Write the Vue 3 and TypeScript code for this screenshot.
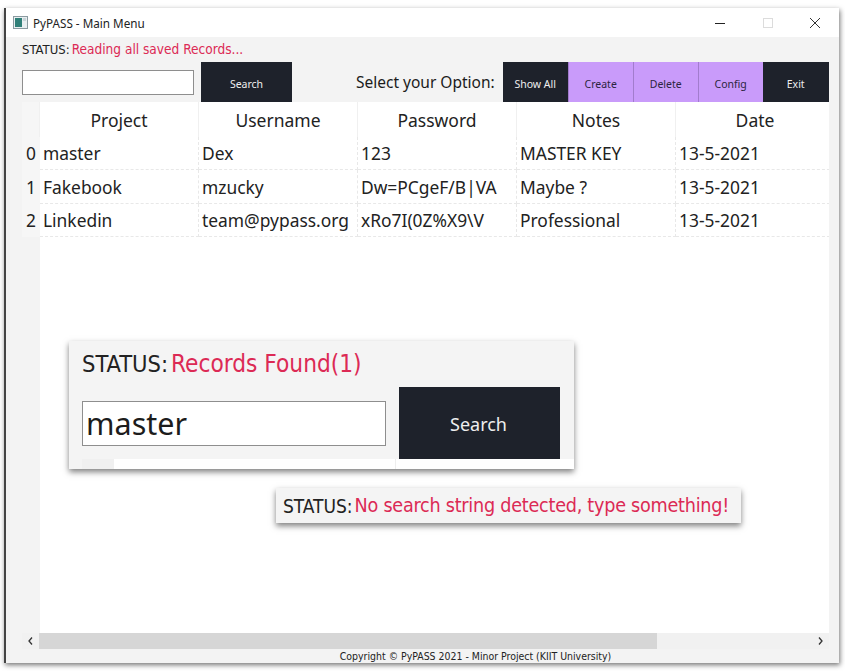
<script setup lang="ts">
const columns: string[] = ['Project', 'Username', 'Password', 'Notes', 'Date']
const rows: string[][] = [
  ['master', 'Dex', '123', 'MASTER KEY', '13-5-2021'],
  ['Fakebook', 'mzucky', 'Dw=PCgeF/B|VA', 'Maybe ?', '13-5-2021'],
  ['Linkedin', 'team@pypass.org', 'xRo7I(0Z%X9\\V', 'Professional', '13-5-2021'],
]
const options = [
  { label: 'Show All', dark: true },
  { label: 'Create', dark: false },
  { label: 'Delete', dark: false },
  { label: 'Config', dark: false },
  { label: 'Exit', dark: true },
]
</script>

<template>
  <div class="page">
    <div class="window">
      <header class="titlebar">
        <svg class="app-icon" width="15" height="13" viewBox="0 0 15 13">
          <rect x="0.5" y="0.5" width="14" height="12" fill="#e8eef0" stroke="#8a9aa0" />
          <rect x="2" y="2" width="7" height="9" fill="#2f7f78" />
          <rect x="10" y="2" width="3" height="3" fill="#c8d4d8" />
        </svg>
        <span class="title">PyPASS - Main Menu</span>
        <div class="controls">
          <svg width="12" height="12" viewBox="0 0 12 12"><path d="M1 6.5h10" stroke="#222" stroke-width="1" /></svg>
          <svg width="12" height="12" viewBox="0 0 12 12"><rect x="1.5" y="1.5" width="9" height="9" fill="none" stroke="#dcdcdc" /></svg>
          <svg width="12" height="12" viewBox="0 0 12 12"><path d="M1 1l10 10M11 1L1 11" stroke="#333" stroke-width="1" fill="none" /></svg>
        </div>
      </header>

      <main class="body">
        <p class="status">
          <span class="status-key">STATUS:</span><span class="status-msg">Reading all saved Records...</span>
        </p>

        <div class="toolbar">
          <input class="search-input" type="text" />
          <button class="btn btn-dark search-btn">Search</button>
          <span class="select-label">Select your Option:</span>
          <div class="options">
            <button
              v-for="o in options"
              :key="o.label"
              class="btn option"
              :class="o.dark ? 'btn-dark' : 'btn-light'"
            >{{ o.label }}</button>
          </div>
        </div>

        <div class="table-area">
          <div class="grid">
            <div class="corner"></div>
            <div v-for="c in columns" :key="c" class="head">{{ c }}</div>
            <template v-for="(row, i) in rows" :key="i">
              <div class="row-no">{{ i }}</div>
              <div v-for="(cell, j) in row" :key="j" class="cell">{{ cell }}</div>
            </template>
          </div>
          <div class="table-rest">
            <div class="rest-gutter"></div>
            <div class="rest-white"></div>
          </div>
          <div class="hscroll">
            <svg class="arrow" width="8" height="10" viewBox="0 0 8 10"><path d="M5.5 1.5L2.5 5l3 3.5" fill="none" stroke="#333" stroke-width="1.3" /></svg>
            <div class="track"><div class="thumb"></div></div>
            <svg class="arrow" width="8" height="10" viewBox="0 0 8 10"><path d="M2.5 1.5L5.5 5l-3 3.5" fill="none" stroke="#333" stroke-width="1.3" /></svg>
          </div>
        </div>

        <footer class="copyright">Copyright © PyPASS 2021 - Minor Project (KIIT University)</footer>
      </main>
    </div>

    <section class="callout callout-found">
      <p class="big-status">
        <span class="status-key">STATUS:</span><span class="status-msg">Records Found(1)</span>
      </p>
      <div class="found-row">
        <div class="big-input">master</div>
        <button class="btn btn-dark big-search">Search</button>
      </div>
      <div class="found-table">
        <div class="ft-gutter"></div>
        <div class="ft-col"></div>
        <div class="ft-col2"></div>
      </div>
    </section>

    <section class="callout callout-empty">
      <span class="status-key">STATUS:</span><span class="status-msg">No search string detected, type something!</span>
    </section>
  </div>
</template>

<style>
html, body { margin: 0; background: #fff; }
</style>

<style scoped>
.page {
  position: relative;
  width: 845px;
  height: 671px;
  overflow: hidden;
  background: #fff;
  font-family: "Noto Sans", "Open Sans", sans-serif;
  padding: 8px 6px 8px 4px;
  box-sizing: border-box;
}
.window {
  height: 655px;
  display: flex;
  flex-direction: column;
  background: #f3f3f3;
  box-shadow: 1px 2px 5px rgba(0, 0, 0, 0.55);
  border-left: 2px solid #444;
}
.titlebar {
  height: 29px;
  flex: none;
  background: #fff;
  display: flex;
  align-items: center;
  padding-left: 7px;
}
.app-icon { flex: none; }
.title { margin-left: 5px; font-size: 11.7px; color: #222; }
.controls {
  margin-left: auto;
  display: flex;
  gap: 35.5px;
  margin-right: 18px;
}
.body {
  flex: 1;
  display: flex;
  flex-direction: column;
  padding: 0 10px 0 16px;
  min-height: 0;
}
.status {
  margin: 0;
  height: 25px;
  box-sizing: border-box;
  padding-bottom: 1px;
  display: flex;
  align-items: center;
  font-family: "DejaVu Sans Condensed", "DejaVu Sans", sans-serif;
  font-size: 13px;
  white-space: nowrap;
}
.status-key { color: #222; margin-right: 2px; }
.status-msg { color: #dc2a55; }
.status .status-msg { font-size: 13.55px; }
.toolbar {
  height: 40px;
  flex: none;
  display: flex;
  align-items: flex-start;
}
.search-input {
  width: 172px;
  height: 25px;
  box-sizing: border-box;
  margin-top: 8px;
  border: 1px solid #8e8e8e;
  background: #fff;
  padding: 0;
}
.btn {
  border: none;
  padding: 0;
  margin: 0;
  font-family: "Noto Sans", sans-serif;
  font-size: 10.5px;
  display: flex;
  align-items: center;
  justify-content: center;
  padding-top: 3px;
  box-sizing: border-box;
}
.btn-dark { background: #1e222b; color: #eee; }
.btn-light { background: #c99bfa; color: #2b2540; border-left: 1px solid #a27ccd; }
.search-btn { width: 91px; height: 40px; margin-left: 7px; }
.select-label {
  margin-left: 64px;
  font-size: 15.5px;
  color: #1b1b1b;
  line-height: 40px;
  white-space: nowrap;
}
.options { display: flex; margin-left: 8px; width: 326px; }
.option { flex: none; width: 65px; height: 40px; }
.option:last-child { width: 66px; }
.table-area {
  flex: 1;
  display: flex;
  flex-direction: column;
  min-height: 0;
}
.grid {
  display: grid;
  grid-template-columns: 18px 159px 159px 159px 159px 159px;
  grid-template-rows: 35px 33px 34px 33px;
  flex: none;
  background: #fff;
  font-size: 17.4px;
  color: #222;
  overflow: hidden;
}
.corner { background: #f6f6f6; border-right: 1px solid #f0f0f0; }
.head {
  display: flex;
  align-items: center;
  justify-content: center;
  font-size: 17.5px;
  border-right: 1px solid #f0f0f0;
  background: #fff;
}
.row-no {
  background: #f6f6f6;
  display: flex;
  align-items: center;
  justify-content: center;
  border-bottom: 1px solid #f6f6f6;
}
.cell {
  display: flex;
  align-items: center;
  padding-left: 3px;
  white-space: nowrap;
  overflow: hidden;
  border-right: 1px dashed #e8e8e8;
  border-bottom: 1px dashed #e8e8e8;
}
.table-rest { flex: 1; display: flex; min-height: 0; }
.rest-gutter { width: 18px; background: #f3f3f3; }
.rest-white { flex: 1; background: #fff; }
.hscroll {
  height: 16px;
  flex: none;
  display: flex;
  align-items: center;
  background: #f1f1f1;
}
.arrow { flex: none; width: 17px; }
.track { flex: 1; height: 16px; }
.thumb { width: 618px; height: 16px; background: #d6d6d6; }
.copyright {
  height: 14px;
  flex: none;
  text-align: center;
  font-family: "DejaVu Sans Condensed", "DejaVu Sans", sans-serif;
  font-size: 10.45px;
  line-height: 15px;
  color: #222;
  white-space: nowrap;
  padding-left: 100px;
}
.callout {
  position: absolute;
  background: #f4f4f4;
  box-shadow: 0 3px 6px rgba(0, 0, 0, 0.5);
  font-family: "DejaVu Sans Condensed", "DejaVu Sans", sans-serif;
}
.callout-found {
  left: 69px;
  top: 341px;
  width: 505px;
  height: 128px;
}
.big-status {
  margin: 0;
  height: 46px;
  padding-left: 13px;
  display: flex;
  align-items: center;
  font-size: 23.5px;
  white-space: nowrap;
}
.big-status .status-key { margin-right: 3px; }
.big-status .status-msg { font-size: 24.2px; }
.found-row { display: flex; align-items: flex-start; height: 72px; }
.big-input {
  margin-left: 13px;
  margin-top: 14px;
  width: 304px;
  height: 45px;
  box-sizing: border-box;
  border: 1.5px solid #8e8e8e;
  background: #fff;
  font-family: "Noto Sans", sans-serif;
  font-size: 30.5px;
  line-height: 43px;
  padding-left: 3px;
  color: #1c1c1c;
}
.big-search {
  width: 161px;
  height: 72px;
  margin-left: 13px;
  font-size: 18px;
  padding-top: 2px;
  padding-right: 2px;
  margin-bottom: 0;
}
.found-table {
  height: 10px;
  display: flex;
}
.ft-gutter { margin-left: 13px; width: 32px; background: #f0f0f0; }
.ft-col { width: 281px; background: #fff; border-right: 1px solid #eee; }
.ft-col2 { flex: 1; background: #fff; }
.callout-empty {
  left: 276px;
  top: 488px;
  width: 465px;
  height: 35px;
  display: flex;
  align-items: center;
  padding-left: 7px;
  box-sizing: border-box;
  font-size: 19px;
  white-space: nowrap;
}
.callout-empty .status-msg { font-size: 19.6px; letter-spacing: -0.25px; }
</style>
